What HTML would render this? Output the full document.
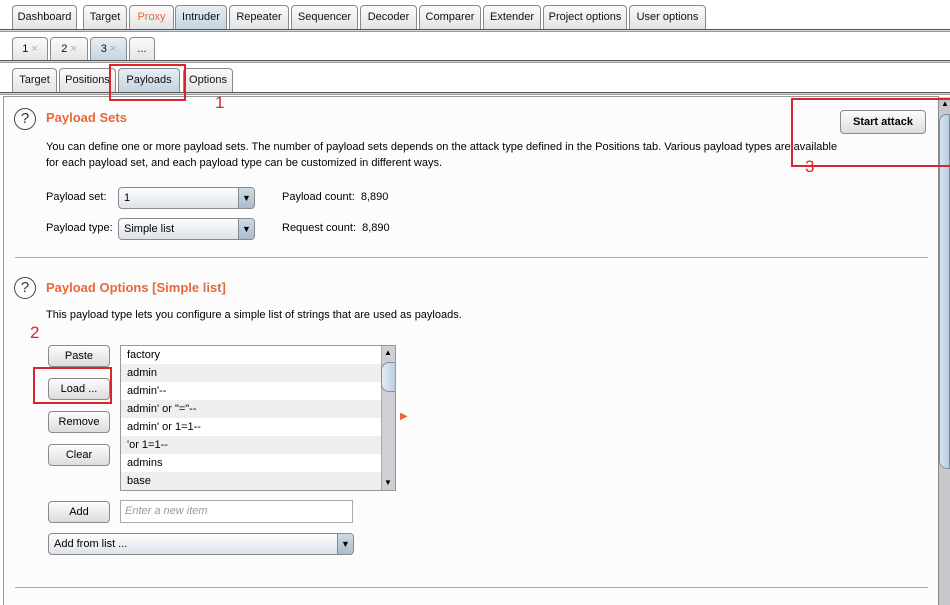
<!DOCTYPE html>
<html><head><meta charset="utf-8"><style>
*{margin:0;padding:0;box-sizing:border-box}
body{width:950px;height:605px;overflow:hidden;background:#fff;font-family:"Liberation Sans",sans-serif;font-size:11px;color:#000;position:relative}
.a{position:absolute}
.tab{position:absolute;height:24px;border:1px solid #8a8a8a;border-bottom:none;border-radius:4px 4px 0 0;background:linear-gradient(#fbfbfb,#e4e4e4);text-align:center;line-height:23px;font-size:11px;color:#111}
.tab.sel{background:linear-gradient(#e8eef4,#c4d3e0)}
.line{position:absolute;left:0;width:950px;height:3px;border-top:1px solid #555;border-bottom:1px solid #999;background:#cfd9e2}
.btn{position:absolute;border:1px solid #8a8a8a;border-radius:4px;background:linear-gradient(#fdfdfd,#dcdcdc);text-align:center;font-size:11px}
.h{position:absolute;color:#e8683a;font-weight:bold;font-size:13px}
.q{position:absolute;width:22px;height:22px;border:1.5px solid #444;border-radius:50%;text-align:center;line-height:19px;font-size:15px;color:#333}
.sel2{position:absolute;border:1px solid #8a8a8a;border-radius:4px;background:linear-gradient(#fdfdfd,#dde3ea);font-size:11px;line-height:20px;padding-left:5px}
.sel2 .ar{position:absolute;right:0;top:0;bottom:0;width:16px;background:linear-gradient(#cfdbe6,#a9bccd);border-left:1px solid #8a8a8a;border-radius:0 3px 3px 0;text-align:center;font-size:9px}
.red{position:absolute;border:2px solid #d9252e}
.rn{position:absolute;color:#d9252e;font-size:17px}
.li{height:18px;line-height:18px;padding-left:6px;font-size:11px}
.li:nth-child(even){background:#efefef}
.hr{position:absolute;height:1px;background:#aaa}
</style></head><body>
<!-- row1 -->
<div class="tab" style="left:12px;top:5px;width:65px">Dashboard</div>
<div class="tab" style="left:83px;top:5px;width:44px">Target</div>
<div class="tab" style="left:129px;top:5px;width:45px;color:#e8683a">Proxy</div>
<div class="tab sel" style="left:175px;top:5px;width:52px">Intruder</div>
<div class="tab" style="left:229px;top:5px;width:60px">Repeater</div>
<div class="tab" style="left:291px;top:5px;width:67px">Sequencer</div>
<div class="tab" style="left:360px;top:5px;width:57px">Decoder</div>
<div class="tab" style="left:419px;top:5px;width:62px">Comparer</div>
<div class="tab" style="left:483px;top:5px;width:58px">Extender</div>
<div class="tab" style="left:543px;top:5px;width:84px">Project options</div>
<div class="tab" style="left:629px;top:5px;width:77px">User options</div>
<div class="line" style="top:29px"></div>
<!-- row2 -->
<div class="tab" style="left:12px;top:37px;width:36px">1 <span style="color:#aaa">×</span></div>
<div class="tab" style="left:50px;top:37px;width:38px">2 <span style="color:#aaa">×</span></div>
<div class="tab sel" style="left:90px;top:37px;width:37px">3 <span style="color:#aaa">×</span></div>
<div class="tab" style="left:129px;top:37px;width:26px">...</div>
<div class="line" style="top:60px"></div>
<!-- row3 -->
<div class="tab" style="left:12px;top:68px;width:45px">Target</div>
<div class="tab" style="left:59px;top:68px;width:57px">Positions</div>
<div class="tab sel" style="left:118px;top:68px;width:62px">Payloads</div>
<div class="tab" style="left:183px;top:68px;width:50px">Options</div>
<div class="line" style="top:92px"></div>
<!-- panel -->
<div class="a" style="left:3px;top:96px;width:936px;height:509px;border-left:1px solid #999;border-top:1px solid #999;background:#fcfcfc"></div>
<!-- scrollbar -->
<div class="a" style="left:938px;top:97px;width:12px;height:508px;background:#c8c8cc;border-left:1px solid #888"></div>
<div class="a" style="left:939px;top:114px;width:11px;height:355px;background:linear-gradient(90deg,#d6e4f0,#b8cde0);border:1px solid #7d8fa0;border-radius:8px 0 0 8px"></div>
<div class="a" style="left:941px;top:99px;font-size:8px">▲</div>
<!-- section 1 -->
<div class="q" style="left:14px;top:108px">?</div>
<div class="h" style="left:46px;top:110px">Payload Sets</div>
<div class="a" style="left:46px;top:139px;line-height:16px">You can define one or more payload sets. The number of payload sets depends on the attack type defined in the Positions tab. Various payload types are available<br>for each payload set, and each payload type can be customized in different ways.</div>
<div class="btn" style="left:840px;top:110px;width:86px;height:24px;line-height:22px;font-weight:bold">Start attack</div>
<div class="a" style="left:46px;top:191px">Payload set:</div>
<div class="sel2" style="left:118px;top:187px;width:137px;height:22px">1<div class="ar">▼</div></div>
<div class="a" style="left:282px;top:191px">Payload count:&nbsp; 8,890</div>
<div class="a" style="left:46px;top:222px">Payload type:</div>
<div class="sel2" style="left:118px;top:218px;width:137px;height:22px">Simple list<div class="ar">▼</div></div>
<div class="a" style="left:282px;top:222px">Request count:&nbsp; 8,890</div>
<div class="hr" style="left:15px;top:257px;width:913px"></div>
<!-- section 2 -->
<div class="q" style="left:14px;top:277px">?</div>
<div class="h" style="left:46px;top:280px">Payload Options [Simple list]</div>
<div class="a" style="left:46px;top:309px">This payload type lets you configure a simple list of strings that are used as payloads.</div>
<div class="btn" style="left:48px;top:345px;width:62px;height:22px;line-height:20px">Paste</div>
<div class="btn" style="left:48px;top:378px;width:62px;height:22px;line-height:20px">Load ...</div>
<div class="btn" style="left:48px;top:411px;width:62px;height:22px;line-height:20px">Remove</div>
<div class="btn" style="left:48px;top:444px;width:62px;height:22px;line-height:20px">Clear</div>
<div class="a" style="left:120px;top:345px;width:276px;height:146px;border:1px solid #999;background:#fff;overflow:hidden">
<div style="width:260px"><div class="li">factory</div><div class="li">admin</div><div class="li">admin'--</div><div class="li">admin' or "="--</div><div class="li">admin' or 1=1--</div><div class="li">'or 1=1--</div><div class="li">admins</div><div class="li">base</div></div>
<div class="a" style="left:260px;top:0;width:15px;height:144px;background:#d0d0d4;border-left:1px solid #aaa"></div>
<div class="a" style="left:260px;top:16px;width:15px;height:30px;background:linear-gradient(90deg,#e4edf5,#b9cde0);border:1px solid #7d8fa0;border-radius:8px 0 0 8px"></div>
<div class="a" style="left:263px;top:2px;font-size:8px">▲</div>
<div class="a" style="left:263px;top:132px;font-size:8px">▼</div>
</div>
<div class="a" style="left:400px;top:411px;color:#e8683a;font-size:10px">▶</div>
<div class="btn" style="left:48px;top:501px;width:62px;height:22px;line-height:20px">Add</div>
<div class="a" style="left:120px;top:500px;width:233px;height:23px;border:1px solid #aaa;background:#fff;color:#999;font-style:italic;line-height:21px;padding-left:4px">Enter a new item</div>
<div class="sel2" style="left:48px;top:533px;width:306px;height:22px">Add from list ...<div class="ar">▼</div></div>
<div class="hr" style="left:15px;top:587px;width:913px"></div>
<!-- annotations -->
<div class="red" style="left:109px;top:64px;width:77px;height:37px"></div>
<div class="rn" style="left:215px;top:93px">1</div>
<div class="red" style="left:33px;top:367px;width:79px;height:37px"></div>
<div class="rn" style="left:30px;top:323px">2</div>
<div class="red" style="left:791px;top:98px;width:165px;height:69px"></div>
<div class="rn" style="left:805px;top:157px">3</div>
</body></html>
